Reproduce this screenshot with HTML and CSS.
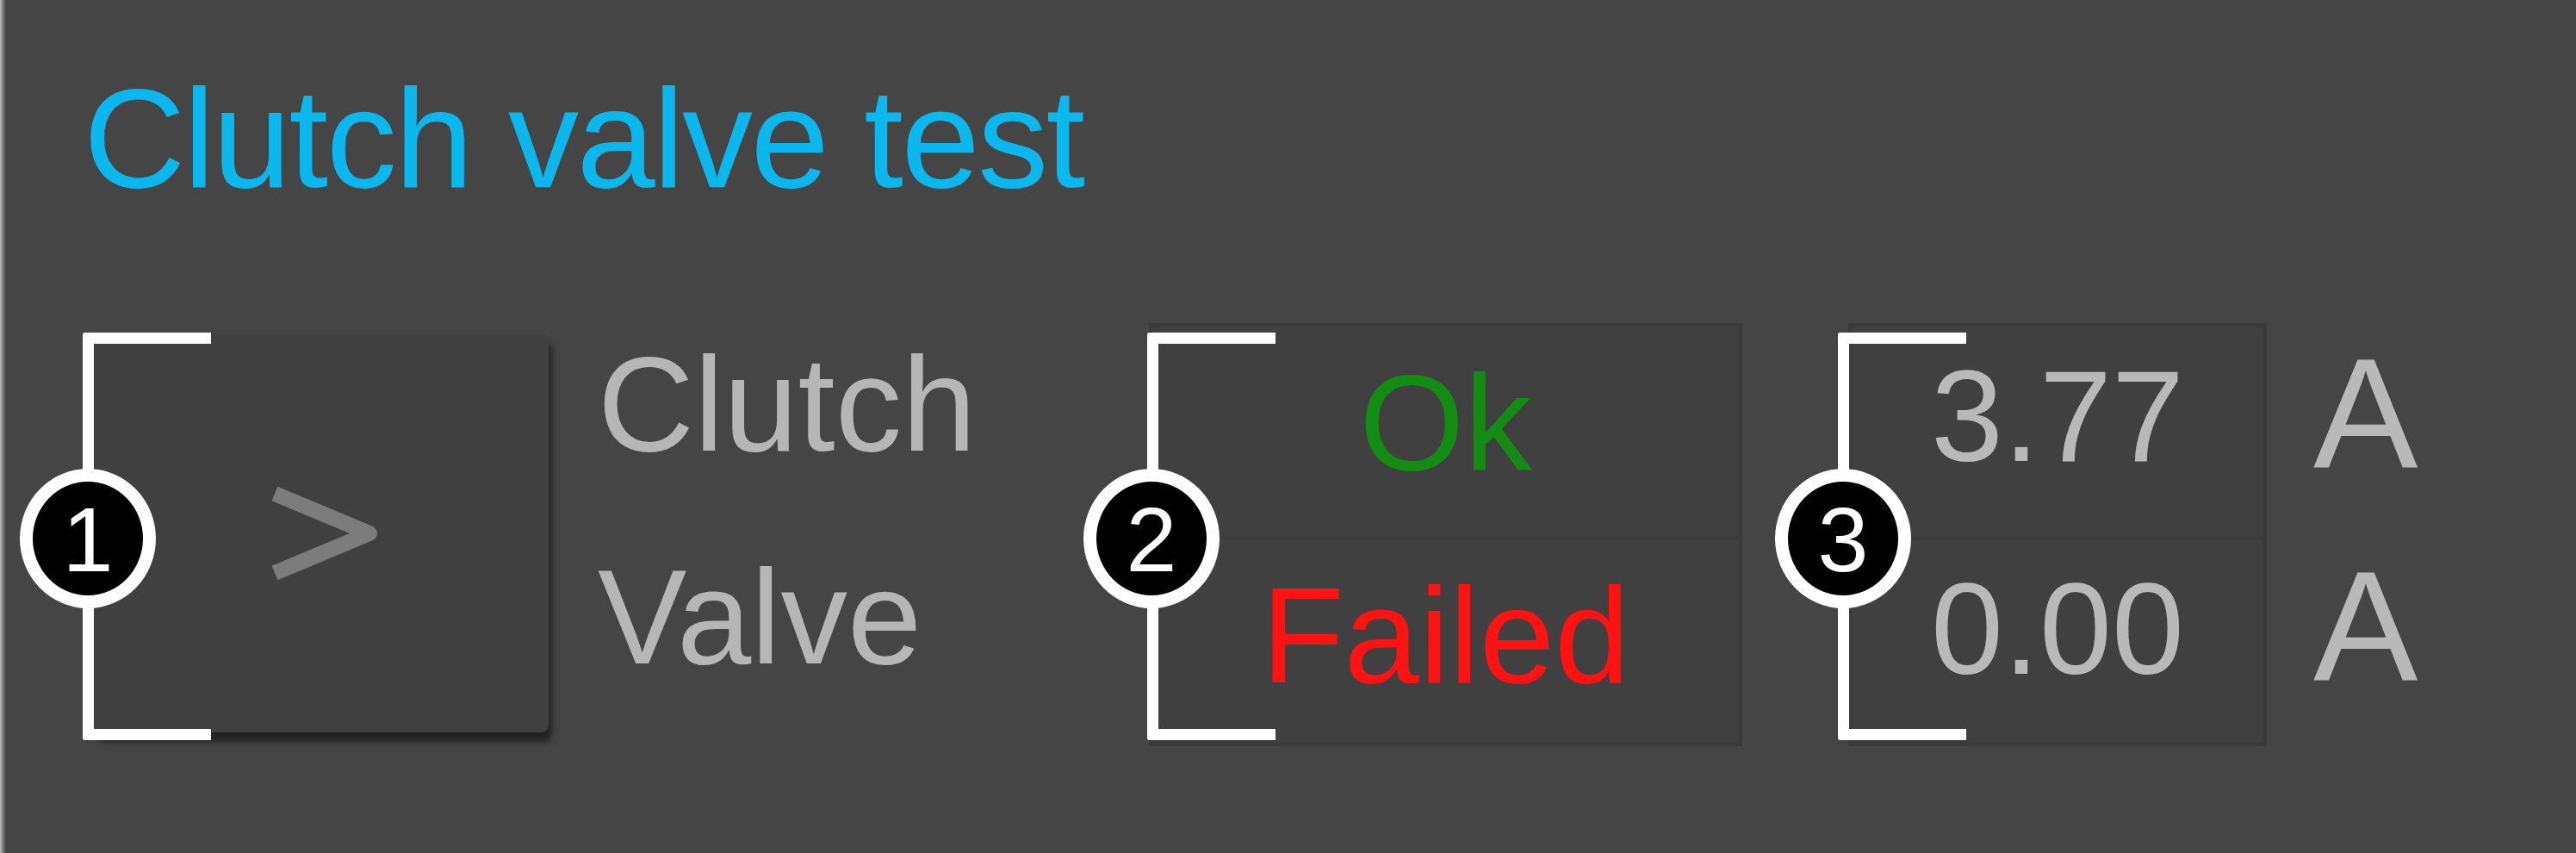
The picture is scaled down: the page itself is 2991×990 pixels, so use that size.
FILE: index.html
```html
<!DOCTYPE html>
<html lang="en">
<head>
<meta charset="utf-8">
<title>Clutch valve test</title>
<link rel="stylesheet" href="styles.css">
</head>
<body>
<div class="panel">
  <h1 class="title">Clutch valve test</h1>
  <div class="row">
    <div class="group group-btn">
      <button class="btn" type="button" aria-label="Run">
        <svg class="chev" width="132" height="112" viewBox="0 0 132 112"><polyline points="12,10 122,56 12,102" fill="none" stroke="#7c7c7c" stroke-width="18" stroke-linejoin="round" stroke-linecap="butt"/></svg>
      </button>
      <span class="bracket b1"></span>
      <span class="badge g1">1</span>
    </div>
    <div class="labels">
      <div class="label">Clutch</div>
      <div class="label">Valve</div>
    </div>
    <div class="group group-status">
      <div class="box status">
        <div class="cell top"><span class="ok">Ok</span></div>
        <div class="cell bottom"><span class="failed">Failed</span></div>
      </div>
      <span class="bracket b2"></span>
      <span class="badge g2">2</span>
    </div>
    <div class="group group-values">
      <div class="box values">
        <div class="cell top"><span class="num">3.77</span></div>
        <div class="cell bottom"><span class="num">0.00</span></div>
      </div>
      <span class="bracket b3"></span>
      <span class="badge g3">3</span>
    </div>
    <div class="units">
      <div class="unit">A</div>
      <div class="unit">A</div>
    </div>
  </div>
</div>
</body>
</html>
```

FILE: styles.css
```css
html, body {
  margin: 0;
  padding: 0;
}
body {
  width: 2991px;
  height: 990px;
  overflow: hidden;
  background: #454545;
  font-family: "Liberation Sans", Arial, sans-serif;
}
.panel {
  height: 990px;
  box-sizing: border-box;
  padding-top: 79px;
  background-color: #454545;
  background-image: linear-gradient(to right, #b8b8b8 0, #9c9c9c 2px, #6c6c6c 4px, #454545 7px);
  background-size: 8px 100%;
  background-repeat: no-repeat;
}
.title {
  margin: 0;
  padding-left: 97px;
  font-size: 164px;
  line-height: 164px;
  font-weight: normal;
  letter-spacing: -2.5px;
  color: #0bb8ee;
}
.row {
  display: flex;
  align-items: flex-start;
  margin-top: 132px;
}
.group {
  position: relative;
}
.group-btn {
  margin-left: 109px;
  margin-top: 12px;
}
.btn {
  display: flex;
  align-items: center;
  justify-content: center;
  width: 528px;
  height: 463px;
  padding: 0;
  border: none;
  border-radius: 9px;
  background: #404040;
  box-shadow: 4px 11px 7px rgba(0, 0, 0, 0.5);
}
.labels {
  width: 640px;
  margin-left: 57px;
  margin-top: -29px;
}
.label {
  font-size: 155px;
  line-height: 247px;
  color: #b6b6b6;
}
.box {
  box-sizing: border-box;
  height: 491px;
  border: 5px solid #3b3b3b;
  background: #404040;
  display: flex;
  flex-direction: column;
  text-align: center;
}
.status {
  width: 689px;
}
.values {
  width: 486px;
}
.group-values {
  margin-left: 123px;
}
.cell.top {
  height: 242px;
  border-bottom: 5px solid #3b3b3b;
}
.cell.bottom {
  height: 234px;
}
.ok, .failed {
  display: block;
  font-size: 157px;
  line-height: 222px;
}
.ok {
  color: #138c13;
}
.failed {
  color: #ff1212;
}
.num {
  display: block;
  font-size: 151px;
  line-height: 205px;
  color: #b9b9b9;
}
.units {
  margin-left: 54px;
  margin-top: -18px;
}
.unit {
  font-size: 182px;
  line-height: 247px;
  color: #b9b9b9;
}
.bracket {
  position: absolute;
  box-sizing: border-box;
  width: 149px;
  height: 473px;
  border: 13px solid #ffffff;
  border-right: none;
  border-radius: 3px 0 0 3px;
  z-index: 2;
}
.b1 {
  left: -13px;
  top: -1px;
}
.b2 {
  left: -2px;
  top: 11px;
}
.b3 {
  left: -12px;
  top: 11px;
}
.badge {
  position: absolute;
  box-sizing: border-box;
  width: 158px;
  height: 162px;
  border: 15px solid #ffffff;
  border-radius: 50%;
  background: #000000;
  color: #ffffff;
  font-size: 106px;
  line-height: 134px;
  text-align: center;
  z-index: 3;
}
.g1 {
  left: -86px;
  top: 157px;
}
.g2 {
  left: -76px;
  top: 169px;
}
.g3 {
  left: -85px;
  top: 169px;
}
```
